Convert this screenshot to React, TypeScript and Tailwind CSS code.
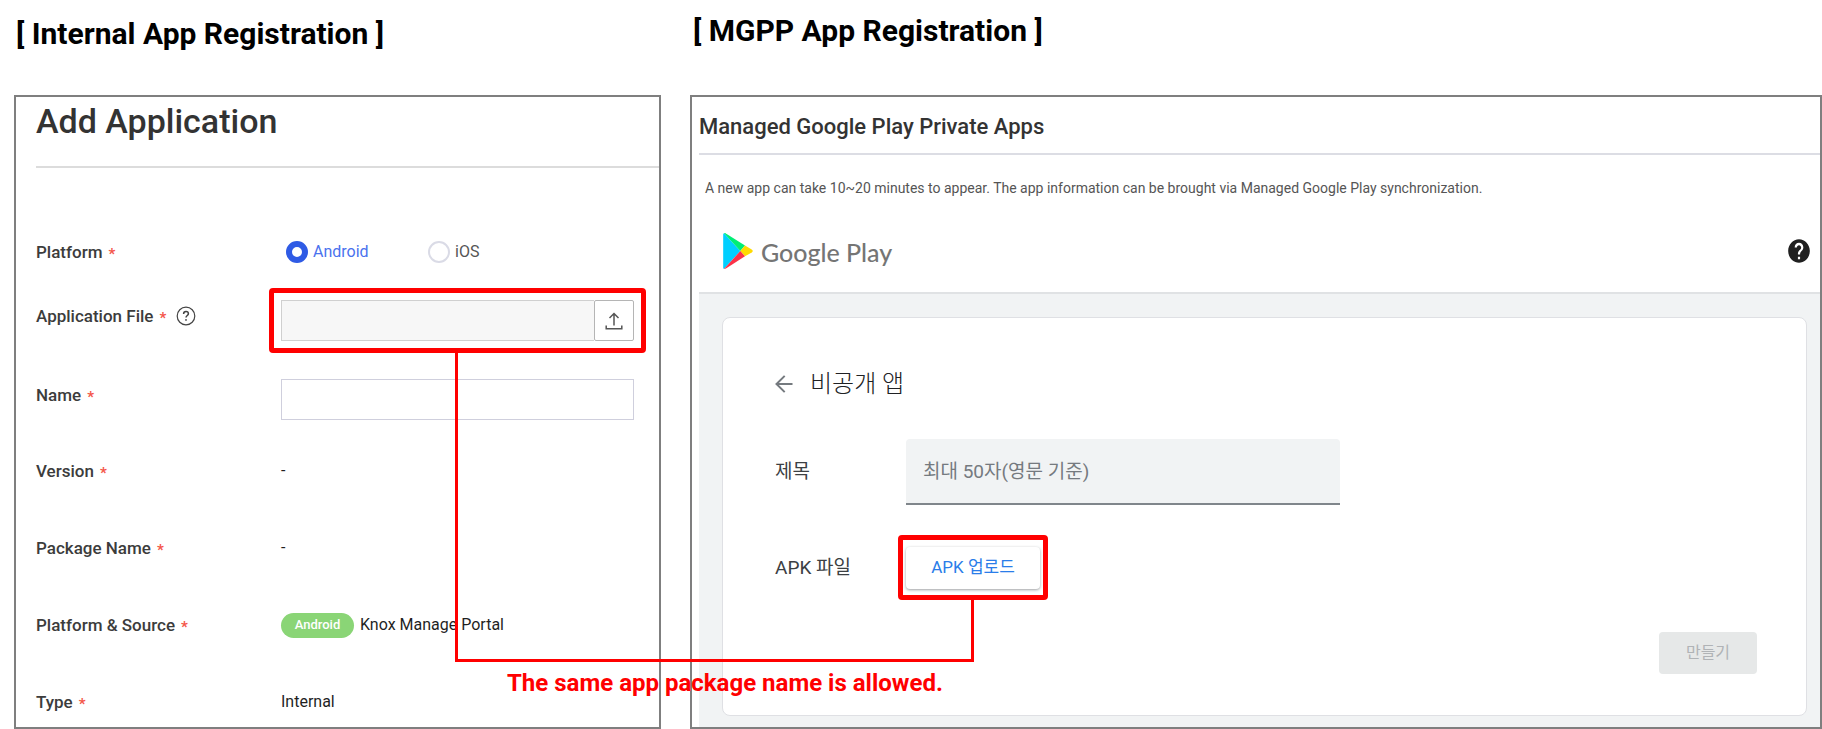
import type { ReactNode } from "react";
import { MdHelp } from "react-icons/md";

const roboto = "font-['Roboto','Noto_Sans_CJK_KR',sans-serif]";

function FieldLabel({ text, htmlFor, children }: { text: string; htmlFor?: string; children?: ReactNode }) {
  return (
    <div className="flex w-[245px] shrink-0 items-center text-[17px] leading-6 font-medium text-[#3c3c3c]">
      {htmlFor ? <label htmlFor={htmlFor}>{text}</label> : <span>{text}</span>}
      <span aria-hidden="true" className="ml-1.5 pt-1 text-[15px] font-bold text-[#f4574a]">*</span>
      {children}
    </div>
  );
}

function ValueRow({ label, children }: { label: string; children: ReactNode }) {
  return (
    <div className="flex h-6 items-center">
      <FieldLabel text={label} />
      <div className="flex items-center text-[16px] leading-6 text-[#1f1f1f]">{children}</div>
    </div>
  );
}

function PlatformOption({ id, text, checked }: { id: string; text: string; checked?: boolean }) {
  return (
    <div className="flex w-[142px] items-center gap-[5px]">
      <input
        type="radio"
        id={id}
        name="platform"
        defaultChecked={checked}
        className="peer m-0 h-[22px] w-[22px] appearance-none rounded-full border-2 border-[#dadbe6] bg-white checked:border-[6px] checked:border-[#2f5be5]"
      />
      <label htmlFor={id} className="text-[16px] leading-6 text-[#555] peer-checked:text-[#4a72ee]">
        {text}
      </label>
    </div>
  );
}

function Highlight({ className }: { className: string }) {
  return <div className={`pointer-events-none absolute z-10 rounded-sm border-[5px] border-[#ff0000] ${className}`} />;
}

function PlayLogo() {
  return (
    <svg viewBox="0 0 30 36" className="h-9 w-[30px]" aria-hidden="true">
      <path d="M1 .2C.4.5.2 1 .2 1.800v32.600c0 .7.200 1.200.8 1.500L17.300 18z" fill="#00cfff" />
      <path d="M1 .2c.5-.3 1.200-.2 1.900.2L22 12.600 17.300 18z" fill="#00ee76" />
      <path d="M22 12.600l6.700 3.900c1.400.9 1.400 2.200 0 3L22 23.300 17.300 18z" fill="#ffda00" />
      <path d="M1 35.900c.5.200 1.200.1 1.900-.3L22 23.300 17.300 18z" fill="#fb3248" />
    </svg>
  );
}

function InternalPanel() {
  return (
    <section className="flex w-[647px] shrink-0 flex-col">
      <h2 className={`${roboto} flex h-[95px] items-start pt-3.5 pl-0.5 text-[30px] leading-10 font-bold whitespace-nowrap text-black`}>
        [ Internal App Registration ]
      </h2>
      <div className={`${roboto} grow border-2 border-[#7f7f7f] bg-white pb-[13px] pl-5`}>
        <h1 className="pt-1 text-[34px] leading-10 font-medium text-[#333]">Add Application</h1>
        <hr className="mt-[25px] border-0 border-t-2 border-[#dcdcdc]" />
        <form className="pt-[72px] pr-[25px]">
          <div className="mb-9 flex h-6 items-center">
            <FieldLabel text="Platform" />
            <div className="flex pl-[5px]">
              <PlatformOption id="android" text="Android" checked />
              <PlatformOption id="ios" text="iOS" />
            </div>
          </div>
          <div className="mb-[38px] flex items-start">
            <div className="pt-0.5">
              <FieldLabel text="Application File" htmlFor="file">
                <button type="button" aria-label="Help" className="ml-[10px]">
                  <svg viewBox="0 0 20 20" className="h-5 w-5" fill="none" stroke="#444" strokeWidth="1.200">
                    <circle cx="10" cy="10" r="8.800" />
                    <path d="M7.600 8.100c0-1.500 1-2.500 2.400-2.500s2.400.9 2.400 2.200c0 1.600-2.400 1.900-2.400 3.800" strokeWidth="1.500" />
                    <circle cx="10" cy="13.900" r=".9" fill="#444" stroke="none" />
                  </svg>
                </button>
              </FieldLabel>
            </div>
            <div className="relative flex h-[41px] flex-1">
              <input id="file" readOnly className="min-w-0 flex-1 border border-r-0 border-[#d0d0d0] bg-[#f7f7f7]" />
              <button
                type="button"
                aria-label="Upload"
                className="flex w-10 items-center justify-center rounded-xs border border-[#b5b5b5] bg-white"
              >
                <svg viewBox="0 0 18 18" className="h-[18px] w-[18px]" fill="none" stroke="#555" strokeWidth="1.500">
                  <path d="M9 13.500V1.500M4.500 6L9 1.500 13.500 6" />
                  <path d="M1.200 13.500v3.300h15.600v-3.300" />
                </svg>
              </button>
              <Highlight className="-inset-3" />
            </div>
          </div>
          <div className="mb-[39px] flex items-start">
            <div className="pt-0.5">
              <FieldLabel text="Name" htmlFor="name" />
            </div>
            <input id="name" className="h-[41px] min-w-0 flex-1 border border-[#cfcfdd] bg-white px-3" />
          </div>
          <div className="flex flex-col gap-[53px]">
            <ValueRow label="Version">-</ValueRow>
            <ValueRow label="Package Name">-</ValueRow>
            <ValueRow label="Platform & Source">
              <span className="mr-1.5 flex h-[25px] w-[73px] items-center justify-center rounded-full bg-[#8ad576] text-[13px] font-medium text-white">
                Android
              </span>
              Knox Manage Portal
            </ValueRow>
            <ValueRow label="Type">Internal</ValueRow>
          </div>
        </form>
      </div>
    </section>
  );
}

function ManagedPlayPanel() {
  return (
    <section className="flex min-w-0 flex-1 flex-col">
      <h2 className={`${roboto} flex h-[95px] items-start pt-[11px] pl-[3px] text-[30px] leading-10 font-bold whitespace-nowrap text-black`}>
        [ MGPP App Registration ]
      </h2>
      <div className={`${roboto} flex grow flex-col border-2 border-[#7f7f7f] bg-white pl-[7px]`}>
        <h1 className="pt-3.5 text-[22px] leading-8 font-medium text-[#333]">Managed Google Play Private Apps</h1>
        <hr className="mt-[10px] border-0 border-t-2 border-[#dcdde4]" />
        <p className="pt-[23px] pl-1.5 text-[14px] leading-5 text-[#555]">
          A new app can take 10~20 minutes to appear. The app information can be brought via Managed Google Play
          synchronization.
        </p>
        <header className="mt-[10px] flex h-[86px] items-center justify-between border-b-2 border-[#e0e2e4] pt-0.5 pr-2 pl-6">
          <div className="flex items-center gap-2">
            <PlayLogo />
            <span className="pt-0.5 font-['Lato',sans-serif] text-[25px] leading-9 font-medium text-[#757575]">
              Google Play
            </span>
          </div>
          <button type="button" aria-label="Help">
            <MdHelp className="h-7 w-[26px] text-[#202020]" preserveAspectRatio="none" />
          </button>
        </header>
        <div className="flex flex-1 flex-col bg-[#f1f3f4] pt-[23px] pr-[13px] pb-[11px] pl-[23px]">
          <form className="flex flex-1 flex-col rounded-lg border border-[#dfe0e4] bg-white pt-12 pr-[49px] pb-[41px] pl-[52px]">
            <div className="flex h-9 items-center gap-[17px]">
              <button type="button" aria-label="Back">
                <svg viewBox="0 0 18 18" className="h-[18px] w-[18px]" fill="none" stroke="#757a7f" strokeWidth="2">
                  <path d="M17.500 9H1.500M9.700.9L1.500 9l8.200 8.100" />
                </svg>
              </button>
              <h3 className="text-[24px] leading-8 font-light text-[#202124]">비공개 앱</h3>
            </div>
            <div className="mt-[37px] flex items-center">
              <label htmlFor="title" className="w-[131px] shrink-0 text-[19px] leading-6 text-[#3c4043]">
                제목
              </label>
              <input
                id="title"
                placeholder="최대 50자(영문 기준)"
                className="h-[66px] w-[434px] rounded-t border-b-2 border-[#80868b] bg-[#f1f3f4] px-[17px] text-[19px] text-[#3c4043] placeholder:text-[#757a7f]"
              />
            </div>
            <div className="mt-[42px] flex items-center">
              <span className="w-[131px] shrink-0 text-[19px] leading-6 text-[#3c4043]">APK 파일</span>
              <div className="relative">
                <button
                  type="button"
                  className="block h-[42px] w-[134px] rounded bg-white text-[17px] text-[#2a7de9] shadow-[0_1px_3px_rgba(60,64,67,0.5)]"
                >
                  APK 업로드
                </button>
                <Highlight className="-inset-x-2 -top-3 -bottom-[11px]" />
              </div>
            </div>
            <div className="mt-auto flex justify-end">
              <button type="button" disabled className="h-[42px] w-[98px] rounded bg-[#e6e8e8] text-[16px] text-[#b0b3b6]">
                만들기
              </button>
            </div>
          </form>
        </div>
      </div>
    </section>
  );
}

export default function App() {
  return (
    <main className="relative flex gap-[29px] bg-white pl-3.5">
      <InternalPanel />
      <ManagedPlayPanel />
      <div className="pointer-events-none absolute top-[353px] left-[455px] h-[309px] w-[519px]">
        <div className="h-full w-full border-b-3 border-l-3 border-[#ff0000]" />
        <div className="absolute top-[247px] right-0 bottom-0 w-[3px] bg-[#ff0000]" />
      </div>
      <p className={`${roboto} absolute top-[667px] left-[507px] text-[24px] leading-8 font-bold whitespace-nowrap text-[#ff0000]`}>
        The same app package name is allowed.
      </p>
    </main>
  );
}
